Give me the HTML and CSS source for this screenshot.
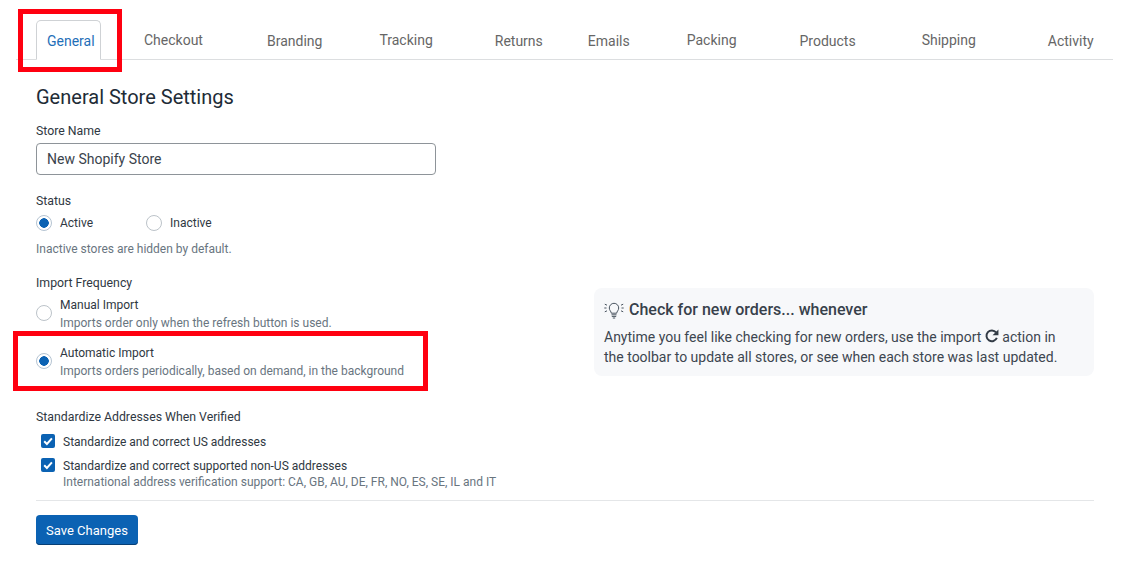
FILE: index.html
```html
<!DOCTYPE html>
<html lang="en">
<head>
<meta charset="utf-8">
<title>General Store Settings</title>
<link rel="stylesheet" href="styles.css">
</head>
<body>
<nav class="tabs">
  <a class="tab tab-active">General</a>
  <a class="tab tab-up tab-checkout">Checkout</a>
  <a class="tab tab-branding">Branding</a>
  <a class="tab tab-up tab-tracking">Tracking</a>
  <a class="tab tab-returns">Returns</a>
  <a class="tab tab-emails">Emails</a>
  <a class="tab tab-up tab-packing">Packing</a>
  <a class="tab tab-products">Products</a>
  <a class="tab tab-up tab-shipping">Shipping</a>
  <a class="tab tab-activity">Activity</a>
</nav>
<main class="content">
  <div class="columns">
    <form class="form">
      <h1 class="title">General Store Settings</h1>
      <div class="label label-store">Store Name</div>
      <div class="input">New Shopify Store</div>
      <div class="label label-status">Status</div>
      <div class="radio-row">
        <span class="radio-pair radio-pair-active"><span class="radio radio-on"></span><span class="opt">Active</span></span>
        <span class="radio-pair"><span class="radio"></span><span class="opt">Inactive</span></span>
      </div>
      <p class="help help-status">Inactive stores are hidden by default.</p>
      <div class="label label-import">Import Frequency</div>
      <div class="choice choice-manual">
        <span class="radio"></span>
        <div><div class="opt">Manual Import</div><div class="help">Imports order only when the refresh button is used.</div></div>
      </div>
      <div class="choice choice-auto">
        <span class="radio radio-on"></span>
        <div><div class="opt">Automatic Import</div><div class="help">Imports orders periodically, based on demand, in the background</div></div>
      </div>
      <div class="label label-std">Standardize Addresses When Verified</div>
      <div class="check check-us">
        <span class="box"><svg viewBox="0 0 14 14" width="14" height="14"><path d="M3.2 7.3 5.9 10 10.9 4.4" fill="none" stroke="#fff" stroke-width="2"/></svg></span>
        <div class="opt">Standardize and correct US addresses</div>
      </div>
      <div class="check check-non">
        <span class="box"><svg viewBox="0 0 14 14" width="14" height="14"><path d="M3.2 7.3 5.9 10 10.9 4.4" fill="none" stroke="#fff" stroke-width="2"/></svg></span>
        <div><div class="opt">Standardize and correct supported non-US addresses</div><div class="help help-intl">International address verification support: CA, GB, AU, DE, FR, NO, ES, SE, IL and IT</div></div>
      </div>
    </form>
    <aside class="tip">
      <h2 class="tip-title">
        <svg class="bulb" viewBox="0 0 20 19" width="20" height="19"><g fill="none" stroke="#4a5560" stroke-width="1"><path d="M7.3 12.2c0-1.800-2-2.700-2-5.200a4.700 4.700 0 0 1 9.400 0c0 2.500-2 3.400-2 5.200z"/><path d="M7.500 13.800h5M7.800 15.400h4.400M8.800 17h2.400"/><path d="M0.800 3.200 3 4.200M0.300 7h2.200M0.800 10.800 3 9.800M19.200 3.200 17 4.200M19.700 7h-2.200M19.200 10.800 17 9.800"/></g></svg>
        Check for new orders... whenever
      </h2>
      <p class="tip-text">Anytime you feel like checking for new orders, use the import <svg class="redo" viewBox="0 0 13 13" width="14" height="14"><path d="M10.300 3.200A5 5 0 1 0 11 8.300" fill="none" stroke="#333c46" stroke-width="1.800"/><path d="M12.500 0.400V5.900H7z" fill="#333c46"/></svg> action in the toolbar to update all stores, or see when each store was last updated.</p>
    </aside>
  </div>
  <div class="footer">
    <button class="save" type="button">Save Changes</button>
  </div>
</main>
<div class="mark mark-tab"></div>
<div class="mark mark-auto"></div>
</body>
</html>
```
FILE: styles.css
```css
* { box-sizing: border-box; }
html, body { margin: 0; padding: 0; }
body {
  width: 1124px;
  height: 562px;
  overflow: hidden;
  position: relative;
  background: #fff;
  font-family: Roboto, "Liberation Sans", sans-serif;
  font-size: 12px;
  color: #2f3842;
}
.tabs {
  display: flex;
  align-items: flex-end;
  height: 60px;
  margin: 0 11px 0 16px;
  padding-left: 20px;
  border-bottom: 1px solid #dcdee0;
  font-size: 14px;
}
.tab { color: #666; padding-bottom: 9px; line-height: 17px; }
.tab-up { padding-bottom: 10px; }
.tab-active {
  width: 65px;
  height: 40px;
  margin-bottom: -1px;
  padding-top: 12px;
  padding-left: 10px;
  color: #1f6fb8;
  background: #fff;
  border: 1px solid #cfd2d5;
  border-bottom-color: #fff;
  border-radius: 5px 5px 0 0;
}
.tab-checkout { margin-left: 43px; }
.tab-branding { margin-left: 64px; }
.tab-tracking { margin-left: 57px; }
.tab-returns { margin-left: 62px; }
.tab-emails { margin-left: 45px; }
.tab-packing { margin-left: 57px; }
.tab-products { margin-left: 63px; }
.tab-shipping { margin-left: 66px; }
.tab-activity { margin-left: 72px; }

.content { padding: 0 30px 0 36px; }
.columns { display: flex; }
.form { width: 558px; flex: none; }
.title {
  margin: 24px 0 0;
  font-size: 20px;
  line-height: 26px;
  font-weight: 400;
  color: #212b36;
}
.label { line-height: 16px; font-size: 12.300px; color: #2f3842; }
.label-store { margin-top: 13px; }
.input {
  width: 400px;
  height: 32px;
  margin-top: 4px;
  padding-left: 10px;
  border: 1px solid #8e9499;
  border-radius: 4px;
  font-size: 14px;
  line-height: 30px;
  color: #3a434c;
}
.label-status { margin-top: 18px; }
.radio-row { display: flex; margin-top: 4px; height: 20px; align-items: center; }
.radio-pair { display: flex; align-items: center; gap: 8px; }
.radio-pair-active { width: 110px; }
.radio {
  flex: none;
  width: 16px;
  height: 16px;
  border-radius: 50%;
  border: 1px solid #bcc3c9;
  background: #fff;
  display: block;
}
.radio-on {
  border-color: #b5c4d2;
  background: radial-gradient(circle, #0b62b3 0 4.500px, #fff 5px);
}
.opt { font-size: 12px; line-height: 18px; color: #2f3842; }
.help { font-size: 12px; line-height: 18px; color: #69757f; margin: 0; }
.help-status { margin-top: 7px; }
.label-import { margin-top: 17px; }
.choice { display: flex; align-items: center; gap: 8px; }
.choice .radio { margin-bottom: 2px; }
.choice-manual { margin-top: 5px; }
.choice-auto { margin-top: 12px; }
.label-std { margin-top: 29px; }
.check { display: flex; gap: 8px; padding-left: 5px; }
.check-us { margin-top: 8px; }
.check-non { margin-top: 6px; }
.box {
  flex: none;
  width: 14px;
  height: 14px;
  border-radius: 2px;
  background: #0b62b3;
  display: block;
  margin-top: 1px;
}
.box svg { display: block; }
.help-intl { line-height: 15px; }
.tip {
  width: 500px;
  height: 88px;
  margin-top: 228px;
  padding: 12px 10px;
  border-radius: 8px;
  background: #f7f8fa;
}
.tip-title {
  display: flex;
  align-items: center;
  gap: 5px;
  margin: 0;
  font-size: 16px;
  line-height: 20px;
  font-weight: 500;
  color: #37414b;
}
.tip-text {
  width: 460px;
  margin: 7px 0 0;
  font-size: 14px;
  line-height: 20px;
  color: #3d4650;
}
.redo { vertical-align: -1px; }
.footer {
  margin-top: 10px;
  padding-top: 14px;
  border-top: 1px solid #e4e6e8;
}
.save {
  display: block;
  width: 102px;
  height: 30px;
  padding: 0;
  border: 0;
  border-radius: 4px;
  background: #0b62b3;
  box-shadow: inset 0 -1px 0 #073f75;
  color: #fff;
  font-family: inherit;
  font-size: 13px;
}
.mark { position: absolute; border: 5px solid #ff0010; }
.mark-tab { left: 18px; top: 9px; width: 104px; height: 63px; }
.mark-auto { left: 13px; top: 331px; width: 415px; height: 60px; }
```
